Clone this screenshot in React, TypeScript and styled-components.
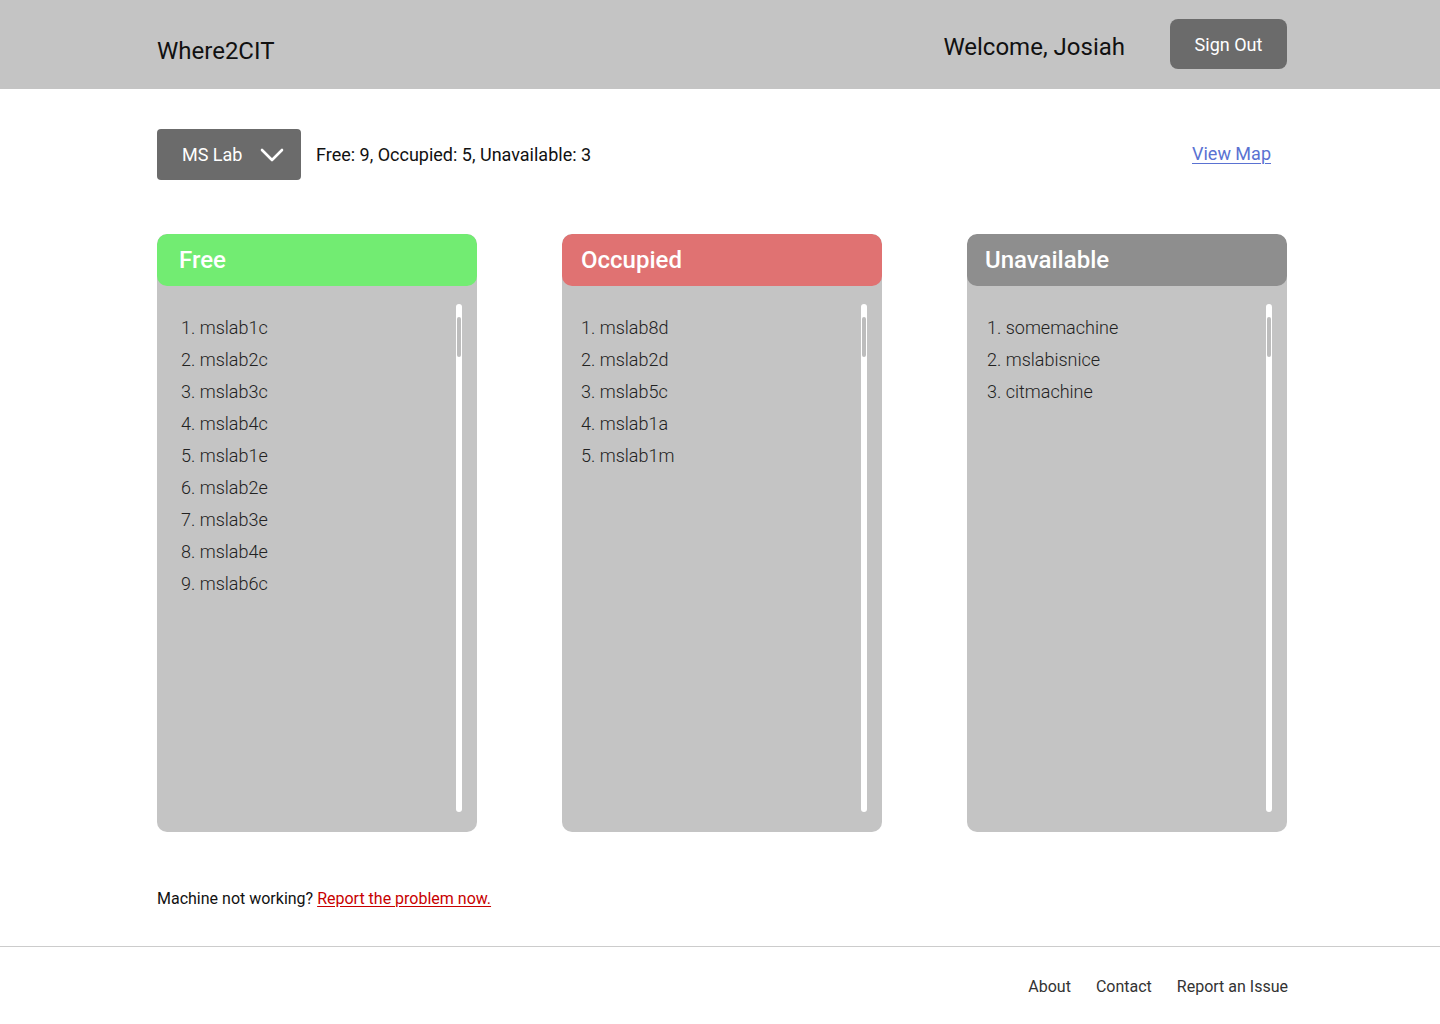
import React from "react";
import styled, { createGlobalStyle } from "styled-components";

const Global = createGlobalStyle`
  html, body { margin: 0; padding: 0; background: #ffffff; }
  body { font-family: Roboto, "Noto Sans", "Liberation Sans", sans-serif; color: #000; }
  * { box-sizing: border-box; }
`;

const Page = styled.div`
  width: 1440px;
  min-height: 1024px;
  display: flex;
  flex-direction: column;
`;

const Header = styled.header`
  height: 89px;
  background: #c4c4c4;
  display: flex;
  align-items: flex-start;
  padding: 0 153px 0 157px;
`;

const Brand = styled.div`
  font-size: 24px;
  line-height: 28px;
  margin-top: 37px;
  color: #111;
  flex: 1;
`;

const Welcome = styled.div`
  font-size: 24px;
  line-height: 28px;
  margin-top: 33px;
  color: #111;
`;

const SignOut = styled.button`
  margin-top: 19px;
  margin-left: 45px;
  width: 117px;
  height: 50px;
  border: none;
  border-radius: 8px;
  background: #6b6b6b;
  color: #fff;
  font-family: inherit;
  font-size: 18px;
  cursor: pointer;
`;

const Main = styled.main`
  padding: 40px 153px 0 157px;
  display: flex;
  flex-direction: column;
`;

const Toolbar = styled.div`
  display: flex;
  align-items: center;
  padding-right: 16px;
`;

const Dropdown = styled.button`
  width: 144px;
  height: 51px;
  border: none;
  border-radius: 4px;
  background: #6b6b6b;
  color: #fff;
  font-family: inherit;
  font-size: 18px;
  display: flex;
  align-items: center;
  padding: 0 17px 0 25px;
  justify-content: space-between;
  cursor: pointer;
`;

const Stats = styled.div`
  margin-left: 15px;
  font-size: 18px;
  color: #111;
  flex: 1;
`;

const MapLink = styled.a`
  font-size: 18px;
  color: #5a72d2;
  text-decoration: underline;
  text-underline-offset: 3px;
  text-decoration-thickness: 1px;
  margin-top: -2px;
`;

const Columns = styled.div`
  margin-top: 54px;
  display: grid;
  grid-template-columns: repeat(3, 320px);
  justify-content: space-between;
`;

const Card = styled.section`
  height: 598px;
  border-radius: 10px;
  background: #c4c4c4;
  display: flex;
  flex-direction: column;
  overflow: hidden;
`;

const CardHead = styled.div<{ $bg: string; $indent: number }>`
  height: 52px;
  background: ${(p) => p.$bg};
  border-radius: 10px;
  color: #fff;
  font-size: 24px;
  font-weight: 500;
  display: flex;
  align-items: center;
  padding-left: ${(p) => p.$indent}px;
`;

const CardBody = styled.div<{ $indent: number }>`
  flex: 1;
  display: flex;
  padding: 18px 15px 20px ${(p) => p.$indent}px;
`;

const List = styled.ol`
  flex: 1;
  margin: 8px 0 0;
  padding: 0;
  list-style: none;
  font-size: 18px;
  line-height: 32px;
  font-weight: 300;
  color: #222;
`;

const Track = styled.div`
  width: 6px;
  border-radius: 3px;
  background: #ffffff;
  display: flex;
  flex-direction: column;
  align-items: center;
`;

const Thumb = styled.div`
  width: 4px;
  height: 40px;
  margin-top: 13px;
  border-radius: 2px;
  background: #bdbdbd;
`;

const Notice = styled.p`
  margin: 57px 0 0;
  font-size: 16px;
  line-height: 19px;
  color: #111;
`;

const ReportLink = styled.a`
  color: #c80000;
  text-decoration: underline;
  text-underline-offset: 2px;
`;

const Footer = styled.footer`
  margin-top: 38px;
  border-top: 1px solid #cccccc;
  height: 78px;
  display: flex;
  justify-content: flex-end;
  align-items: flex-start;
  gap: 25px;
  padding: 30px 152px 0 0;
`;

const FooterLink = styled.a`
  font-size: 16px;
  line-height: 19px;
  color: #333;
  text-decoration: none;
`;

const Chevron = () => (
  <svg width="24" height="14" viewBox="0 0 24 14" fill="none">
    <polyline points="2,2 12,12 22,2" stroke="#fff" strokeWidth="2.6" strokeLinecap="round" strokeLinejoin="round" />
  </svg>
);

const groups = [
  { title: "Free", color: "#72ec72", head: 22, body: 24, items: ["mslab1c", "mslab2c", "mslab3c", "mslab4c", "mslab1e", "mslab2e", "mslab3e", "mslab4e", "mslab6c"] },
  { title: "Occupied", color: "#e07272", head: 19, body: 19, items: ["mslab8d", "mslab2d", "mslab5c", "mslab1a", "mslab1m"] },
  { title: "Unavailable", color: "#8e8e8e", head: 18, body: 20, items: ["somemachine", "mslabisnice", "citmachine"] },
];

export default function App() {
  return (
    <Page>
      <Global />
      <Header>
        <Brand>Where2CIT</Brand>
        <Welcome>Welcome, Josiah</Welcome>
        <SignOut>Sign Out</SignOut>
      </Header>
      <Main>
        <Toolbar>
          <Dropdown>
            <span>MS Lab</span>
            <Chevron />
          </Dropdown>
          <Stats>Free: 9, Occupied: 5, Unavailable: 3</Stats>
          <MapLink href="#">View Map</MapLink>
        </Toolbar>
        <Columns>
          {groups.map((g) => (
            <Card key={g.title}>
              <CardHead $bg={g.color} $indent={g.head}>{g.title}</CardHead>
              <CardBody $indent={g.body}>
                <List>
                  {g.items.map((it, i) => (
                    <li key={it}>{`${i + 1}. ${it}`}</li>
                  ))}
                </List>
                <Track>
                  <Thumb />
                </Track>
              </CardBody>
            </Card>
          ))}
        </Columns>
        <Notice>
          Machine not working? <ReportLink href="#">Report the problem now.</ReportLink>
        </Notice>
      </Main>
      <Footer>
        <FooterLink href="#">About</FooterLink>
        <FooterLink href="#">Contact</FooterLink>
        <FooterLink href="#">Report an Issue</FooterLink>
      </Footer>
    </Page>
  );
}
